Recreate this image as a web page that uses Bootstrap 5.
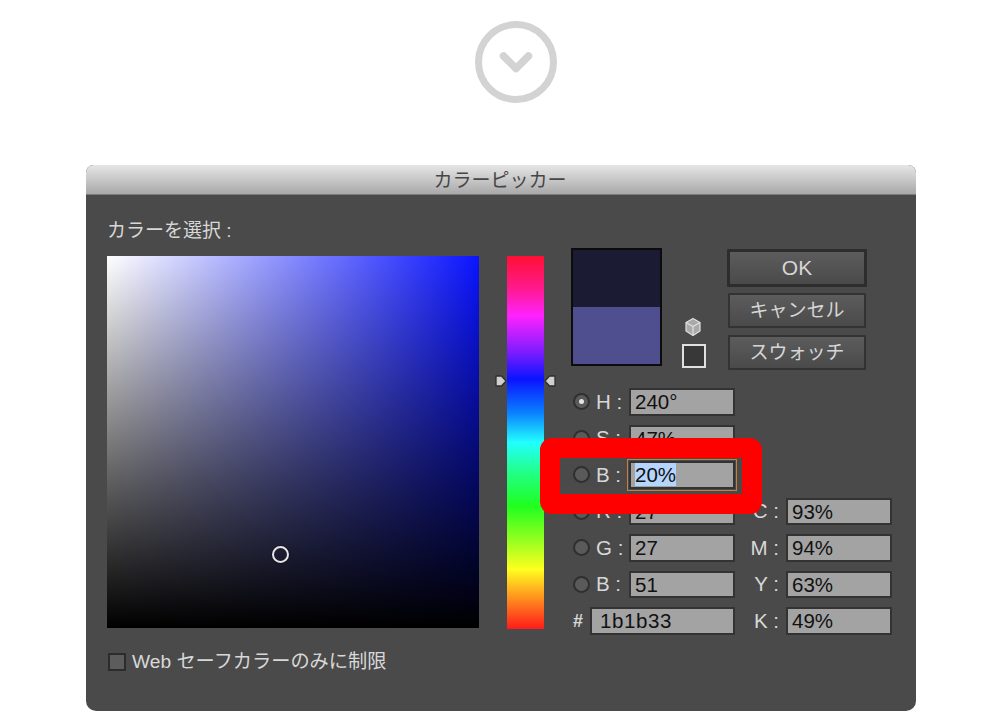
<!DOCTYPE html>
<html lang="ja">
<head>
<meta charset="utf-8">
<title>カラーピッカー</title>
<link href="https://cdn.jsdelivr.net/npm/bootstrap@5.3.0/dist/css/bootstrap.min.css" rel="stylesheet">
<style>
html,body{height:711px;overflow:hidden;background:#fff}
body{font-family:"Liberation Sans","Noto Sans CJK JP",sans-serif;color:#d8d8d8}
.down-icon{display:block;margin:21px 0 0 475px;width:82px;height:82px}
.picker{width:830px;height:546px;margin:62px 0 0 86px;background:#4a4a4a;border-radius:8px 8px 10px 10px;overflow:hidden;position:relative}
.picker-title{height:30px;line-height:31px;padding-right:2px;text-align:center;font-size:19px;color:#464646;background:linear-gradient(#e6e6e6,#a9a9a9);border-bottom:1px solid #7d7d7d}
.picker-body{padding:22px 24px 0 21px}
.pick-label{height:31px;line-height:27px;font-size:19px}
.sat-field{width:372px;height:372px;margin-top:8px;background:linear-gradient(to top,#000,rgba(0,0,0,.62) 40%,rgba(0,0,0,0)),linear-gradient(to right,#fff,#0a14ff);position:relative}
.sat-cursor{position:absolute;left:165px;top:290px;width:17px;height:17px;border:2px solid #e6e6e6;border-radius:50%;box-shadow:0 0 0 1px rgba(0,0,0,.35)}
.hue-bar{width:37px;height:373px;margin:8px 27px 0 28px;position:relative;background:linear-gradient(#ff0f33 0,#ff1a90 9%,#ff22ff 16%,#7a1cff 26%,#0a14ff 33%,#0a80ff 42%,#22ffff 50%,#22ff88 58%,#1fff1f 67%,#a0ff1f 77%,#ffff1f 84%,#ff9a1f 91%,#ff1a1a 100%)}
.hue-arrow{position:absolute;top:118px;width:12px;height:15px}
.hue-arrow-l{left:-12px}
.hue-arrow-r{right:-12px}
.side-col{width:321px}
.side-top{height:140px}
.preview{width:91px;height:118px;border:2px solid #0c0c0e;display:flex;flex-direction:column;flex:none}
.prev-new{height:57px;background:#1b1b33}
.prev-old{flex:1;background:#4f4f8f}
.gamut{width:24px;margin:69px 21px 0 20px;flex:none}
.gamut svg{display:block;margin:0 auto 7px;width:18px;height:20px;transform:translateX(-1px)}
.web-sq{display:block;width:24px;height:24px;border:2px solid #e0e0e0;background:#383838}
.btn-col{width:140px;margin-top:1px}
.dlg-btn{display:block;width:138px;height:35px;margin:0 auto 7px;padding:0;line-height:30px;font-size:19px;color:#d6d6d6;background:linear-gradient(#5c5c5c,#4a4a4a);border:2px solid #333;border-radius:1px}
.dlg-btn:hover{color:#d6d6d6;background:linear-gradient(#5c5c5c,#4a4a4a);border-color:#333}
.dlg-btn-ok{width:140px;height:38px;margin-bottom:6px;border:3px solid #2d2d2d;line-height:30px;font-size:21px}
.val-grid{display:grid;grid-template-columns:58px 106px 51px 106px;grid-auto-rows:27.5px;row-gap:9px}
.val-cell{display:flex;align-items:center;font-size:20.5px;line-height:1;white-space:nowrap}
.val-wide{grid-column:span 2}
.radio-dot{width:17px;height:17px;margin:0 6px 0 2px;flex:none;border-radius:50%;border:2px solid #2f2f2f;background:#5a5a5a;display:flex;align-items:center;justify-content:center}
.radio-dot i{display:block;width:5px;height:5px;border-radius:50%;background:#e4e4e4}
.cmyk-label{justify-content:flex-end;padding-right:7px}
.val-input{display:block;height:27.5px;line-height:24px;padding-left:4px;font-size:20.5px;color:#111;background:#a3a3a3;border:2px solid #333}
.val-input-hex{width:145px;margin-left:0;padding-left:8px;letter-spacing:.6px}
.hash-label{width:19px;padding-left:2px;font-weight:700;font-size:18px}
.val-focus{outline:1px solid #c6803c;outline-offset:1px}
.val-focus span{background:#b6d5fd}
.web-check{display:flex;align-items:center;margin-top:15px;font-size:19.2px;line-height:24px}
.check-box{width:18px;height:18px;margin:0 6px 0 1px;background:#5c5c5c;border:2px solid #2c2c2c;flex:none}
.red-frame{position:absolute;left:454px;top:273px;width:222px;height:76px;border:20px solid #fe0000;border-radius:12px}
</style>
</head>
<body>
<svg class="down-icon" viewBox="0 0 82 82" fill="none" stroke="#d3d3d3">
  <circle cx="41" cy="41" r="37.5" stroke-width="7"/>
  <path d="M28.500 35 L41 47.500 L53.500 35" stroke-width="7.500" stroke-linecap="round" stroke-linejoin="round"/>
</svg>

<div class="picker">
  <div class="picker-title">カラーピッカー</div>
  <div class="picker-body">
    <div class="pick-label">カラーを選択 :</div>
    <div class="d-flex align-items-start">
      <div class="sat-field flex-shrink-0"><div class="sat-cursor"></div></div>
      <div class="hue-bar flex-shrink-0">
        <svg class="hue-arrow hue-arrow-l" viewBox="0 0 12 15"><path d="M1 2H6.500L11 7L6.500 12H1Z" fill="#cfcfcf" stroke="#2e2e2e" stroke-width="1.300" stroke-linejoin="round"/></svg>
        <svg class="hue-arrow hue-arrow-r" viewBox="0 0 12 15"><path d="M11 2H5.500L1 7L5.500 12H11Z" fill="#cfcfcf" stroke="#2e2e2e" stroke-width="1.300" stroke-linejoin="round"/></svg>
      </div>
      <div class="side-col flex-shrink-0">
        <div class="side-top d-flex align-items-start">
          <div class="preview"><div class="prev-new"></div><div class="prev-old"></div></div>
          <div class="gamut">
            <svg viewBox="0 0 18 20" fill="#a9a9a9" stroke="#e0e0e0" stroke-width="1.200" stroke-linejoin="round">
              <path d="M9 1.500L16 5.500V14L9 18.500L2 14V5.500Z"/>
              <path d="M2 5.500L9 9.500L16 5.500M9 9.500V18.500" fill="none"/>
            </svg>
            <span class="web-sq"></span>
          </div>
          <div class="btn-col">
            <button type="button" class="btn dlg-btn dlg-btn-ok">OK</button>
            <button type="button" class="btn dlg-btn">キャンセル</button>
            <button type="button" class="btn dlg-btn">スウォッチ</button>
          </div>
        </div>
        <div class="val-grid">
          <div class="val-cell"><span class="radio-dot"><i></i></span>H :</div><div class="val-input">240°</div><div></div><div></div>
          <div class="val-cell"><span class="radio-dot"></span>S :</div><div class="val-input">47%</div><div></div><div></div>
          <div class="val-cell"><span class="radio-dot"></span>B :</div><div class="val-input val-focus"><span>20%</span></div><div></div><div></div>
          <div class="val-cell"><span class="radio-dot"></span>R :</div><div class="val-input">27</div><div class="val-cell cmyk-label">C :</div><div class="val-input">93%</div>
          <div class="val-cell"><span class="radio-dot"></span>G :</div><div class="val-input">27</div><div class="val-cell cmyk-label">M :</div><div class="val-input">94%</div>
          <div class="val-cell"><span class="radio-dot"></span>B :</div><div class="val-input">51</div><div class="val-cell cmyk-label">Y :</div><div class="val-input">63%</div>
          <div class="val-cell val-wide"><span class="hash-label">#</span><div class="val-input val-input-hex">1b1b33</div></div><div class="val-cell cmyk-label">K :</div><div class="val-input">49%</div>
        </div>
      </div>
    </div>
    <div class="web-check"><span class="check-box"></span>Web セーフカラーのみに制限</div>
  </div>
  <div class="red-frame"></div>
</div>
<script src="https://cdn.jsdelivr.net/npm/bootstrap@5.3.0/dist/js/bootstrap.bundle.min.js"></script>
</body>
</html>
